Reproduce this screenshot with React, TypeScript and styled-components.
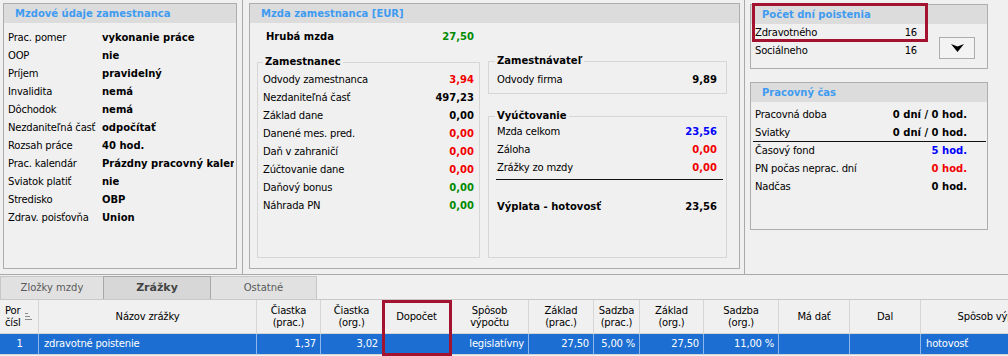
import React from "react";
import styled, { createGlobalStyle } from "styled-components";

const GlobalStyle = createGlobalStyle`
  html, body { margin: 0; padding: 0; background: #f0f0f0; }
  body { font-family: "DejaVu Sans", "Liberation Sans", sans-serif; font-size: 10px; color: #000; }
  * { box-sizing: border-box; }
`;

const Screen = styled.div`
  position: relative;
  width: 1008px;
  height: 356px;
  overflow: hidden;
  background: #f0f0f0;
  letter-spacing: -0.2px;
`;

const TopArea = styled.div`
  display: flex;
  height: 275px;
  border-bottom: 1px solid #a9a9a9;
`;

const Column = styled.div<{ $width?: number; $pl: number; $pt: number; $divider?: boolean }>`
  display: flex;
  flex-direction: column;
  flex: ${(p) => (p.$width ? `0 0 ${p.$width}px` : "1 1 auto")};
  padding: ${(p) => p.$pt}px 0 0 ${(p) => p.$pl}px;
  border-right: ${(p) => (p.$divider ? "1px solid #a9a9a9" : "none")};
`;

const Panel = styled.section<{ $w: number; $h: number; $mt?: number }>`
  width: ${(p) => p.$w}px;
  height: ${(p) => p.$h}px;
  margin-top: ${(p) => p.$mt || 0}px;
  border: 1px solid #adadad;
  display: flex;
  flex-direction: column;
  overflow: hidden;
`;

const PanelHeader = styled.div`
  flex: none;
  height: 19px;
  line-height: 19px;
  padding-left: 11px;
  background: #dcdcdc;
  color: #3f9bf0;
  font-weight: bold;
  letter-spacing: 0;
`;

/* Panel 1 */
const InfoList = styled.div`
  display: flex;
  flex-direction: column;
  padding: 6px 2px 0 4px;
`;
const InfoRow = styled.div`
  display: flex;
  height: 18px;
  line-height: 18px;
  white-space: nowrap;
`;
const InfoLabel = styled.span`
  flex: 0 0 94px;
  overflow: hidden;
`;
const InfoValue = styled.span`
  flex: 1 1 0;
  min-width: 0;
  overflow: hidden;
  font-weight: bold;
  letter-spacing: 0;
`;

/* Panel 2 */
const WageBody = styled.div`
  display: grid;
  grid-template-columns: 223px 239px;
  column-gap: 8px;
  padding: 5px 0 0 7px;
`;
const WageCol = styled.div<{ $mt?: number }>`
  display: flex;
  flex-direction: column;
  margin-top: ${(p) => p.$mt || 0}px;
`;
const AmountRow = styled.div<{ $bold?: boolean; $pad?: string; $mt?: number }>`
  display: flex;
  justify-content: space-between;
  height: 18px;
  line-height: 18px;
  white-space: nowrap;
  padding: ${(p) => p.$pad || "0"};
  margin-top: ${(p) => p.$mt || 0}px;
  font-weight: ${(p) => (p.$bold ? "bold" : "normal")};
  letter-spacing: ${(p) => (p.$bold ? "0" : "-0.2px")};
`;
const Amount = styled.span<{ $color?: string }>`
  font-weight: bold;
  letter-spacing: 0;
  color: ${(p) => p.$color || "#000"};
`;
const GroupBox = styled.fieldset<{ $h: number; $mt?: number; $pad: string }>`
  margin: ${(p) => p.$mt || 0}px 0 0 0;
  padding: ${(p) => p.$pad};
  border: 1px solid #d6d6d6;
  height: ${(p) => p.$h}px;
  min-width: 0;
`;
const Legend = styled.legend<{ $ml: number }>`
  font-weight: bold;
  padding: 0 2px;
  margin-left: ${(p) => p.$ml}px;
  line-height: 14px;
  letter-spacing: 0;
`;
const Rule = styled.div<{ $m: string }>`
  height: 1px;
  background: #111;
  margin: ${(p) => p.$m};
`;

/* Panel 3 */
const DaysBody = styled.div`
  display: flex;
  padding-left: 4px;
`;
const DaysList = styled.div`
  width: 162px;
`;
const DropButton = styled.button`
  margin: 13px 0 0 22px;
  width: 36px;
  height: 22px;
  padding: 0;
  border: 1px solid #adadad;
  background: #f3f3f3;
  display: flex;
  align-items: center;
  justify-content: center;
`;

/* Panel 4 */
const TimeList = styled.div`
  padding: 4px 20px 0 4px;
`;

/* Tabs */
const TabStrip = styled.div`
  display: flex;
  height: 24px;
  padding-top: 1px;
`;
const Tab = styled.div<{ $w: number; $active?: boolean }>`
  width: ${(p) => p.$w}px;
  margin-left: -1px;
  &:first-child { margin-left: 0; }
  height: 23px;
  line-height: 22px;
  text-align: center;
  border: 1px solid ${(p) => (p.$active ? "#a8a8a8" : "#c6c6c6")};
  border-bottom: none;
  background: ${(p) => (p.$active ? "#d7d7d7" : "#e1e1e1")};
  color: ${(p) => (p.$active ? "#444" : "#5a5a5a")};
  font-weight: ${(p) => (p.$active ? "bold" : "normal")};
  font-size: ${(p) => (p.$active ? "11px" : "10px")};
  letter-spacing: 0;
  position: relative;
  z-index: ${(p) => (p.$active ? 1 : 0)};
`;

/* Grid */
const Table = styled.div`
  border-top: 1px solid #c8c8c8;
  overflow: hidden;
`;
const GridRow = styled.div<{ $head?: boolean }>`
  display: grid;
  grid-template-columns: 39px 218px 64px 62px 68px 78px 65px 46px 64px 75px 71px 71px 148px;
  width: 1069px;
  height: ${(p) => (p.$head ? 34 : 21)}px;
  background: ${(p) => (p.$head ? "#f0f0f0" : "#1c6ed2")};
  color: ${(p) => (p.$head ? "#000" : "#fff")};
`;
const HeadCell = styled.div<{ $left?: boolean }>`
  display: flex;
  align-items: center;
  justify-content: ${(p) => (p.$left ? "flex-start" : "center")};
  text-align: ${(p) => (p.$left ? "left" : "center")};
  padding: 1px ${(p) => (p.$left ? "0 0 5px" : "0 0 0")};
  line-height: 12.5px;
  border-right: 1px solid #d6d6d6;
  border-bottom: 1px solid #d6d6d6;
  white-space: nowrap;
  overflow: hidden;
`;
const DataCell = styled.div<{ $align?: "left" | "right" | "center" }>`
  line-height: 20px;
  padding: 0 4px 0 5px;
  text-align: ${(p) => p.$align || "left"};
  border-right: 1px solid #8fb6e8;
  border-bottom: 1px solid #d6d6d6;
  white-space: nowrap;
  overflow: hidden;
`;
const SortIcon = styled.svg`
  margin-left: 5px;
  flex: none;
`;

const Highlight = styled.div<{ $x: number; $y: number; $w: number; $h: number }>`
  position: absolute;
  left: ${(p) => p.$x}px;
  top: ${(p) => p.$y}px;
  width: ${(p) => p.$w}px;
  height: ${(p) => p.$h}px;
  border: 3px solid #a3122e;
  pointer-events: none;
`;

const RED = "#f20000";
const GREEN = "#008a00";
const BLUE = "#0000ff";

const info: [string, string][] = [
  ["Prac. pomer", "vykonanie práce"],
  ["OOP", "nie"],
  ["Príjem", "pravidelný"],
  ["Invalidita", "nemá"],
  ["Dôchodok", "nemá"],
  ["Nezdaniteľná časť", "odpočítať"],
  ["Rozsah práce", "40 hod."],
  ["Prac. kalendár", "Prázdny pracovný kalendár"],
  ["Sviatok platiť", "nie"],
  ["Stredisko", "OBP"],
  ["Zdrav. poisťovňa", "Union"],
];

const employee: [string, string, string][] = [
  ["Odvody zamestnanca", "3,94", RED],
  ["Nezdaniteľná časť", "497,23", "#000"],
  ["Základ dane", "0,00", "#000"],
  ["Danené mes. pred.", "0,00", RED],
  ["Daň v zahraničí", "0,00", RED],
  ["Zúčtovanie dane", "0,00", RED],
  ["Daňový bonus", "0,00", GREEN],
  ["Náhrada PN", "0,00", GREEN],
];

const cols: { head: React.ReactNode; value: string; align: "left" | "right" | "center" }[] = [
  { head: "", value: "1", align: "center" },
  { head: "Názov zrážky", value: "zdravotné poistenie", align: "left" },
  { head: <>Čiastka<br />(prac.)</>, value: "1,37", align: "right" },
  { head: <>Čiastka<br />(org.)</>, value: "3,02", align: "right" },
  { head: "Dopočet", value: "", align: "right" },
  { head: <>Spôsob<br />výpočtu</>, value: "legislatívny", align: "right" },
  { head: <>Základ<br />(prac.)</>, value: "27,50", align: "right" },
  { head: <>Sadzba<br />(prac.)</>, value: "5,00 %", align: "right" },
  { head: <>Základ<br />(org.)</>, value: "27,50", align: "right" },
  { head: <>Sadzba<br />(org.)</>, value: "11,00 %", align: "right" },
  { head: "Má dať", value: "", align: "right" },
  { head: "Dal", value: "", align: "right" },
  { head: "Spôsob výplaty", value: "hotovosť", align: "left" },
];

export default function App() {
  return (
    <Screen>
      <GlobalStyle />
      <TopArea>
        <Column $width={243} $pl={3} $pt={3} $divider>
          <Panel $w={234} $h={266}>
            <PanelHeader>Mzdové údaje zamestnanca</PanelHeader>
            <InfoList>
              {info.map(([l, v]) => (
                <InfoRow key={l}>
                  <InfoLabel>{l}</InfoLabel>
                  <InfoValue>{v}</InfoValue>
                </InfoRow>
              ))}
            </InfoList>
          </Panel>
        </Column>

        <Column $width={502} $pl={6} $pt={3} $divider>
          <Panel $w={491} $h={266}>
            <PanelHeader>Mzda zamestnanca [EUR]</PanelHeader>
            <WageBody>
              <WageCol>
                <AmountRow $bold $pad="0 6px 0 9px">
                  <span>Hrubá mzda</span>
                  <Amount $color={GREEN}>27,50</Amount>
                </AmountRow>
                <GroupBox $h={203} $mt={9} $pad="2px 5px 0 5px">
                  <Legend $ml={0}>Zamestnanec</Legend>
                  {employee.map(([l, v, c]) => (
                    <AmountRow key={l}>
                      <span>{l}</span>
                      <Amount $color={c}>{v}</Amount>
                    </AmountRow>
                  ))}
                </GroupBox>
              </WageCol>
              <WageCol $mt={26}>
                <GroupBox $h={40} $pad="3px 9px 0 8px">
                  <Legend $ml={-2}>Zamestnávateľ</Legend>
                  <AmountRow>
                    <span>Odvody firma</span>
                    <Amount>9,89</Amount>
                  </AmountRow>
                </GroupBox>
                <GroupBox $h={149} $mt={15} $pad="0 9px 0 8px">
                  <Legend $ml={-2}>Vyúčtovanie</Legend>
                  <AmountRow>
                    <span>Mzda celkom</span>
                    <Amount $color={BLUE}>23,56</Amount>
                  </AmountRow>
                  <AmountRow>
                    <span>Záloha</span>
                    <Amount $color={RED}>0,00</Amount>
                  </AmountRow>
                  <AmountRow>
                    <span>Zrážky zo mzdy</span>
                    <Amount $color={RED}>0,00</Amount>
                  </AmountRow>
                  <Rule $m="2px -6px 0 -1px" />
                  <AmountRow $bold $mt={18}>
                    <span>Výplata - hotovosť</span>
                    <Amount>23,56</Amount>
                  </AmountRow>
                </GroupBox>
              </WageCol>
            </WageBody>
          </Panel>
        </Column>

        <Column $pl={5} $pt={4}>
          <Panel $w={238} $h={65}>
            <PanelHeader>Počet dní poistenia</PanelHeader>
            <DaysBody>
              <DaysList>
                <AmountRow>
                  <span>Zdravotného</span>
                  <span>16</span>
                </AmountRow>
                <AmountRow>
                  <span>Sociálneho</span>
                  <span>16</span>
                </AmountRow>
              </DaysList>
              <DropButton type="button" aria-label="Rozbaliť">
                <svg width="13" height="8" viewBox="0 0 13 8">
                  <polygon points="0,0 6.5,2.5 13,0 6.5,8" fill="#000" />
                </svg>
              </DropButton>
            </DaysBody>
          </Panel>
          <Panel $w={238} $h={148} $mt={13}>
            <PanelHeader>Pracovný čas</PanelHeader>
            <TimeList>
              <AmountRow>
                <span>Pracovná doba</span>
                <Amount>0 dní / 0 hod.</Amount>
              </AmountRow>
              <AmountRow>
                <span>Sviatky</span>
                <Amount>0 dní / 0 hod.</Amount>
              </AmountRow>
              <Rule $m="-1px -19px 0 -2px" />
              <AmountRow>
                <span>Časový fond</span>
                <Amount $color={BLUE}>5 hod.</Amount>
              </AmountRow>
              <AmountRow>
                <span>PN počas neprac. dní</span>
                <Amount $color={RED}>0 hod.</Amount>
              </AmountRow>
              <AmountRow>
                <span>Nadčas</span>
                <Amount>0 hod.</Amount>
              </AmountRow>
            </TimeList>
          </Panel>
        </Column>
      </TopArea>

      <TabStrip>
        <Tab $w={104}>Zložky mzdy</Tab>
        <Tab $w={108} $active>Zrážky</Tab>
        <Tab $w={107}>Ostatné</Tab>
      </TabStrip>

      <Table>
        <GridRow $head>
          {cols.map((c, i) =>
            i === 0 ? (
              <HeadCell key={i} $left>
                <span>Por<br />čísl</span>
                <SortIcon width="8" height="8" viewBox="0 0 8 8">
                  <rect x="0" y="0" width="3" height="1" fill="#8c8c8c" />
                  <rect x="0" y="3" width="5" height="1" fill="#8c8c8c" />
                  <rect x="0" y="6" width="7" height="1" fill="#8c8c8c" />
                </SortIcon>
              </HeadCell>
            ) : (
              <HeadCell key={i}>
                <span>{c.head}</span>
              </HeadCell>
            )
          )}
        </GridRow>
        <GridRow>
          {cols.map((c, i) => (
            <DataCell key={i} $align={c.align}>
              {c.value}
            </DataCell>
          ))}
        </GridRow>
      </Table>

      <Highlight $x={752} $y={3} $w={176} $h={39} />
      <Highlight $x={382} $y={300} $w={70} $h={56} />
    </Screen>
  );
}
